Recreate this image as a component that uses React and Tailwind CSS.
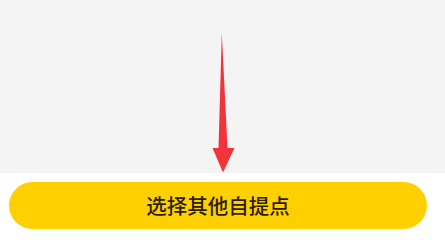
export default function App() {
  return (
    <div className="w-[445px] h-[238px] flex flex-col bg-white overflow-hidden" style={{ fontFamily: '"Noto Sans CJK SC", "Noto Sans", sans-serif' }}>
      <div className="h-[173px] bg-[#f4f4f4] flex justify-center pt-[33px]">
        <svg width="24" height="140" viewBox="0 0 24 140" className="block">
          <path d="M10.8 0 L7.5 115 L1.5 115 L12 139.5 L23.5 115 L16.5 115 Z" fill="#f2333b" />
        </svg>
      </div>
      <div className="flex-1 pl-[9px] pr-[18px] pt-[9px]">
        <div className="h-[47px] rounded-full bg-[#ffd000] flex items-center justify-center">
          <span className="text-[20.5px] font-medium text-[#2a2000]">选择其他自提点</span>
        </div>
      </div>
    </div>
  );
}
